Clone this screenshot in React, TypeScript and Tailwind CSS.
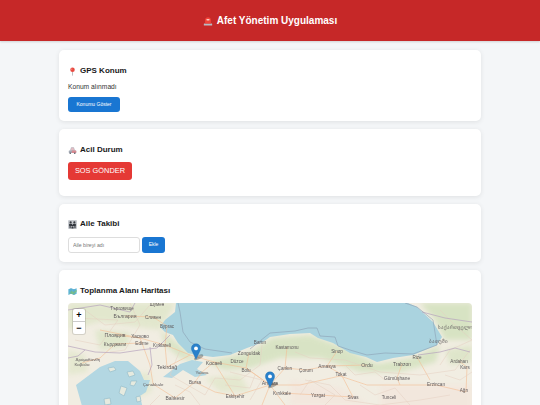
// Afet Yönetim Uygulaması — panel ekranı: GPS, acil durum, aile takibi, harita.

const FONT = 'font-["Liberation_Sans",Arial,sans-serif]';

const ROADS = [
  'M100 330 L140 338 L165 345 L190 355 L214 362 L246 368 L270 385 L300 385 L340 376 L367 385 L400 385 L436 385 L466 392',
  'M165 345 L167 367 L190 355',
  'M125 316 L153 317 L167 326 L165 345',
  'M115 335 L140 338 L142 343 L150 365 L153 384 L175 398',
  'M214 362 L202 372 L195 382 L175 398',
  'M214 362 L235 396 L270 385',
  'M246 368 L270 385 L285 368 L306 370 L327 366 L367 365',
  'M327 366 L341 374 L353 397',
  'M402 364 L397 378 L400 385',
  'M459 361 L467 367 L466 392',
  'M287 347 L285 368',
  'M337 351 L327 366',
  'M82 363 L100 358 L115 344 L142 343',
  'M249 353 L246 368',
  'M417 357 L430 380',
  'M282 393 L318 395 L353 397',
  'M195 382 L215 392 L235 396',
  'M270 385 L262 405',
  'M270 385 L285 405',
];

const THIN_ROADS = [
  'M130 303 L140 325 L125 350 L110 352',
  'M75 340 L100 345 L118 320 L75 318',
  'M180 350 L170 375 L205 395 L215 378 L240 380 L260 365 L262 345',
  'M295 352 L310 358 L345 360 L380 372 L420 375 L455 370 L470 350',
  'M305 380 L330 385 L345 400 L380 405 L420 400 L450 395',
  'M440 310 L455 325 L472 340 L450 350 L440 365',
  'M250 400 L262 380 L230 372',
  'M85 310 L105 325 L135 322 L150 305',
  'M175 385 L190 392 L200 405 M160 395 L150 405',
  'M300 395 L310 380 L335 395 L325 405',
  'M360 385 L375 395 L395 388 L410 405',
  'M445 375 L460 380 L472 372',
  'M225 385 L250 388 L255 375',
  'M345 365 L355 375 L375 372 L385 380',
];

const BORDERS = [
  'M68 346 L95 352 L120 353 L140 350 L157 348 L170 335',
  'M68 310 L100 305 L130 312 L135 303',
  'M150 347 L152 365 L148 375',
  'M418 355 L440 352 L455 348 L470 352',
  'M422 312 L445 318 L472 322',
  'M68 358 L78 356 L85 350',
];

const LABELS: [string, number, number, number][] = [
  ['Шумен', 157, 306, 4.6],
  ['Търговище', 122, 310, 4.6],
  ['България', 125, 318, 5.2],
  ['Сливен', 153, 319, 4.6],
  ['Бургас', 167, 328, 4.6],
  ['Пловдив', 115, 337, 5.2],
  ['Хасково', 140, 338, 4.6],
  ['Кърджали', 115, 346, 4.8],
  ['Edirne', 142, 345, 4.6],
  ['Kırklareli', 162, 347, 4.6],
  ['Δράμα', 82, 361, 4.4],
  ['Ξάνθη', 94, 361, 4.4],
  ['Καβάλα', 82, 366, 4.4],
  ['Tekirdağ', 167, 369, 5.4],
  ['Kocaeli', 214, 365, 5],
  ['Düzce', 237, 363, 4.6],
  ['Zonguldak', 249, 355, 4.8],
  ['Bartın', 260, 344, 4.6],
  ['Bolu', 246, 372, 4.6],
  ['Yalova', 202, 374, 4.4],
  ['Bursa', 195, 384, 4.6],
  ['Çanakkale', 153, 386, 4.4],
  ['Balıkesir', 175, 400, 5],
  ['Eskişehir', 235, 398, 4.6],
  ['Kastamonu', 287, 349, 4.6],
  ['Sinop', 337, 353, 4.6],
  ['Çankırı', 285, 370, 4.6],
  ['Çorum', 306, 372, 4.6],
  ['Amasya', 327, 368, 4.8],
  ['Tokat', 341, 376, 4.6],
  ['Ordu', 367, 367, 5.2],
  ['Trabzon', 402, 366, 5],
  ['Rize', 417, 359, 4.6],
  ['Gümüşhane', 397, 380, 4.8],
  ['ბათუმი', 438, 343, 4.6],
  ['საქართველო', 455, 329, 4.6],
  ['Ardahan', 459, 363, 4.6],
  ['Kars', 465, 369, 4.6],
  ['Erzincan', 436, 386, 4.6],
  ['Ağrı', 464, 392, 4.6],
  ['Ankara', 270, 385, 5.2],
  ['Kırıkkale', 282, 395, 4.6],
  ['Yozgat', 318, 397, 4.6],
  ['Sivas', 353, 399, 4.6],
  ['Tunceli', 389, 399, 4.6],
];

function SirenIcon() {
  return (
    <svg viewBox="0 0 12 12" className="h-[10px] w-[10px]">
      <rect x="1" y="9" width="10" height="2.5" rx="0.5" fill="#b8bcc4" />
      <path d="M2.5 9V5a3.5 3.5 0 0 1 7 0v4z" fill="#f0443a" />
      <rect x="4" y="3.5" width="4" height="2" rx="1" fill="#ffc9c0" />
    </svg>
  );
}

function PinIcon() {
  return (
    <svg viewBox="0 0 12 12" className="h-[9px] w-[9px]">
      <path d="M6 6.5 L6 11.5" stroke="#a8a8ae" strokeWidth="1" />
      <circle cx="6" cy="3.6" r="3" fill="#e8483f" />
      <circle cx="5" cy="2.8" r="0.8" fill="#f7a9a2" />
    </svg>
  );
}

function CarsIcon() {
  return (
    <svg viewBox="0 0 12 12" className="h-[9px] w-[9px]">
      <path d="M3 6 L4.500 2 H7.500 L9 6z" fill="#e3bcc2" stroke="#a0a5b0" strokeWidth="0.6" />
      <rect x="1" y="6" width="10" height="3.2" rx="0.8" fill="#a3a9b5" />
      <rect x="5" y="6" width="6" height="3.2" rx="0.8" fill="#d88a91" />
      <circle cx="3" cy="9.6" r="1.1" fill="#5b606c" />
      <circle cx="9" cy="9.6" r="1.1" fill="#5b606c" />
    </svg>
  );
}

function FamilyIcon() {
  return (
    <svg viewBox="0 0 12 12" className="h-[9px] w-[9px]">
      <rect width="12" height="12" rx="1.500" fill="#c9ccd1" />
      <circle cx="3.500" cy="3" r="1.500" fill="#34383f" />
      <circle cx="8.500" cy="3" r="1.500" fill="#34383f" />
      <path d="M1.500 5h4v3h-4zM6.500 5h4v3h-4z" fill="#34383f" />
      <circle cx="6" cy="7.600" r="1.200" fill="#34383f" />
      <path d="M2 8h1.600v3H2zM8.500 8h1.600v3H8.500zM4.600 9h2.800v2.400H4.600z" fill="#34383f" />
    </svg>
  );
}

function MapIcon() {
  return (
    <svg viewBox="0 0 12 12" className="h-[9px] w-[9px]">
      <path d="M0.500 3 L4 1.500 L8 3 L11.500 1.500 V9 L8 10.500 L4 9 L0.500 10.500z" fill="#5fb4d6" />
      <path d="M1.500 9 L5 4.500 L7 7 L11.500 3.500 V6 L7.500 10 L4 8.500z" fill="#7cc08a" />
      <path d="M4 1.500V9M8 3v7.500" stroke="#3d8fb0" strokeWidth="0.4" />
    </svg>
  );
}

function Marker({ className }: { className: string }) {
  return (
    <svg viewBox="0 0 26 42" className={`absolute h-[17px] w-[10px] overflow-visible ${className}`}>
      <ellipse cx="20" cy="36" rx="13" ry="5" transform="rotate(-25 20 36)" fill="#000" opacity="0.28" />
      <path
        d="M13 1C6 1 1 6.400 1 13c0 3 1.200 6 3 9l9 19 9-19c1.800-3 3-6 3-9C25 6.400 20 1 13 1z"
        fill="#2a81cb"
        stroke="#1f6bae"
      />
      <circle cx="13" cy="13" r="5" fill="#fff" />
    </svg>
  );
}

function SeaMap() {
  return (
    <svg viewBox="68 303 404 110" className="block h-[110px] w-[404px] blur-[0.45px]">
      <defs>
        <filter id="soft" x="-10%" y="-10%" width="120%" height="120%">
          <feGaussianBlur stdDeviation="2.5" />
        </filter>
      </defs>
      <rect x="68" y="303" width="404" height="110" fill="#f1ede2" />
      <g filter="url(#soft)" opacity="0.42">
        <path d="M68 303 H176 L160 330 L130 326 L100 322 L68 330z" fill="#cfe0b2" />
        <path d="M95 330 L130 332 L128 346 L100 350z" fill="#c9dfae" />
        <path d="M160 330 L180 345 L198 362 L180 358 L165 345z" fill="#bcd9a0" />
        <path d="M205 362 L250 352 L272 338 L310 335 L340 346 L377 364 L412 358 L440 345 L436 362 L400 372 L360 372 L320 358 L280 358 L250 368 L225 370z" fill="#b7d79c" />
        <path d="M420 303 H472 V340 L445 340 L435 320z" fill="#b5d69a" />
        <path d="M445 350 L472 345 V362 L450 365z" fill="#c6dcaa" />
        <path d="M205 378 L240 374 L250 392 L220 392z" fill="#d3e2b6" />
        <path d="M120 375 L150 372 L152 392 L130 400z" fill="#d6e4bb" />
        <path d="M68 350 L85 355 L88 372 L68 375z" fill="#d4e2b8" />
        <path d="M290 380 L340 388 L370 405 H290z" fill="#f5e0d8" />
        <path d="M380 385 H472 V413 H380z" fill="#f5e0d8" />
      </g>

      {/* Karadeniz */}
      <path
        d="M176 303 L175 312 L165 320 L160 327 L165 332 L173 335 L178 343 L188 353 L197 355 L213 357 L230 355 L247 348 L263 342 L270 337 L290 334 L310 333 L318 338 L333 343 L350 353 L366 357 L377 362 L393 358 L413 355 L437 345 L442 337 L433 322 L417 307 L408 303z"
        fill="#aad3df"
      />
      {/* Marmara */}
      <path
        d="M163 377 L180 364 L192 360 L203 362 L197 369 L207 375 L195 377 L183 370 L172 378z"
        fill="#b3d7e2"
      />
      {/* Ege */}
      <path
        d="M76 385 L88 376 L100 367 L115 361 L128 361 L140 371 L144 380 L150 380 L146 392 L140 396 L144 413 H84z"
        fill="#b3d7e2"
      />
      <g fill="#e6eadf" stroke="#8fb8c8" strokeWidth="0.6">
        <path d="M108 368 L114 367 L116 370 L110 372z" />
        <path d="M127 372 L133 371 L135 375 L129 377z" />
        <path d="M131 381 L137 381 L134 386 L130 385z" />
        <path d="M121 386 L127 388 L124 396 L119 393z" />
        <path d="M104 399 L110 398 L111 404 L105 405z" />
        <path d="M136 397 L140 396 L141 401 L137 402z" />
      </g>

      <g fill="none" stroke="#f3bd94" strokeWidth="0.7" opacity="0.85">
        {ROADS.map((d) => (
          <path key={d} d={d} />
        ))}
      </g>
      <g fill="none" stroke="#e4cfc0" strokeWidth="0.5">
        {THIN_ROADS.map((d) => (
          <path key={d} d={d} />
        ))}
      </g>
      <g fill="none" stroke="#b6a4bd" strokeWidth="0.7">
        {BORDERS.map((d) => (
          <path key={d} d={d} />
        ))}
      </g>
      {/* Deniz sınırı */}
      <path
        d="M178 303 L180 312 L183 332 L190 342 L205 349 L232 353 M250 349 L270 333 L295 331 L308 328 L317 328 L320 336 L335 337 L338 346 L350 350 L367 355 L385 353 L413 354 L437 345 L433 320 L417 307 L405 303"
        fill="none"
        stroke="#8c9fb4"
        strokeWidth="0.6"
      />

      <g fontFamily="'Liberation Sans', Arial, sans-serif" fill="#5f5a5c" textAnchor="middle">
        {LABELS.map(([name, x, y, size]) => (
          <text key={name} x={x} y={y} fontSize={size}>
            {name}
          </text>
        ))}
      </g>
    </svg>
  );
}

export default function App() {
  return (
    <div className={`h-screen overflow-hidden bg-[#f4f6f8] ${FONT}`}>
      <header className="flex h-[41px] items-center justify-center gap-[4px] bg-[#c62828] text-[10px] font-bold text-white shadow-[0_1px_2px_rgba(0,0,0,0.15)]">
        <SirenIcon />
        <span>Afet Yönetim Uygulaması</span>
      </header>

      <main className="mx-auto mt-[9px] flex w-[422px] flex-col gap-[8.500px]">
        <section className="h-[70.500px] rounded-[5px] bg-white px-[9px] pt-[15px] shadow-[0_1px_5px_rgba(0,0,0,0.09)]">
          <h2 className="flex items-center gap-[3px] text-[8px] leading-[12px] font-bold text-[#1a1a1a]">
            <PinIcon />
            GPS Konum
          </h2>
          <p className="mt-[5px] text-[6.700px] leading-[9px] text-[#333]">Konum alınmadı</p>
          <button className="mt-[6px] block h-[15px] w-[52px] rounded-[3px] bg-[#1976d2] text-[5px] text-white">
            Konumu Göster
          </button>
        </section>

        <section className="h-[66.500px] rounded-[5px] bg-white px-[9px] pt-[15px] shadow-[0_1px_5px_rgba(0,0,0,0.09)]">
          <h2 className="flex items-center gap-[3px] text-[8px] leading-[12px] font-bold text-[#1a1a1a]">
            <CarsIcon />
            Acil Durum
          </h2>
          <button className="mt-[6px] block h-[17.500px] w-[64px] rounded-[3px] bg-[#e53935] text-[7.400px] text-white">
            SOS GÖNDER
          </button>
        </section>

        <section className="h-[57.500px] rounded-[5px] bg-white px-[9px] pt-[14px] shadow-[0_1px_5px_rgba(0,0,0,0.09)]">
          <h2 className="flex items-center gap-[3px] text-[8px] leading-[12px] font-bold text-[#1a1a1a]">
            <FamilyIcon />
            Aile Takibi
          </h2>
          <div className="mt-[7px] flex gap-[2px]">
            <input
              placeholder="Aile bireyi adı"
              className="h-[16px] w-[72px] rounded-[3px] border border-[#ddd] bg-white px-[4px] text-[5.200px] placeholder:text-[#777]"
            />
            <button className="h-[16px] w-[23px] rounded-[3px] bg-[#1976d2] text-[5px] text-white">
              Ekle
            </button>
          </div>
        </section>

        <section className="rounded-[5px] bg-white px-[9px] pt-[15px] pb-[9px] shadow-[0_1px_5px_rgba(0,0,0,0.09)]">
          <h2 className="flex items-center gap-[3px] text-[8px] leading-[12px] font-bold text-[#1a1a1a]">
            <MapIcon />
            Toplanma Alanı Haritası
          </h2>
          <div className="relative mt-[6px] h-[110px] w-[404px] overflow-hidden rounded-[4px]">
            <SeaMap />
            <div className="absolute top-[6px] left-[5px] w-[12px] overflow-hidden rounded-[2px] bg-white text-center text-[9px] leading-[12px] font-bold text-black shadow-[0_0_0_1px_rgba(0,0,0,0.12)]">
              <div className="h-[12.500px] border-b border-[#ccc]">+</div>
              <div className="h-[12px]">−</div>
            </div>
            <Marker className="top-[40px] left-[123px]" />
            <Marker className="top-[68px] left-[197px]" />
          </div>
        </section>
      </main>
    </div>
  );
}
